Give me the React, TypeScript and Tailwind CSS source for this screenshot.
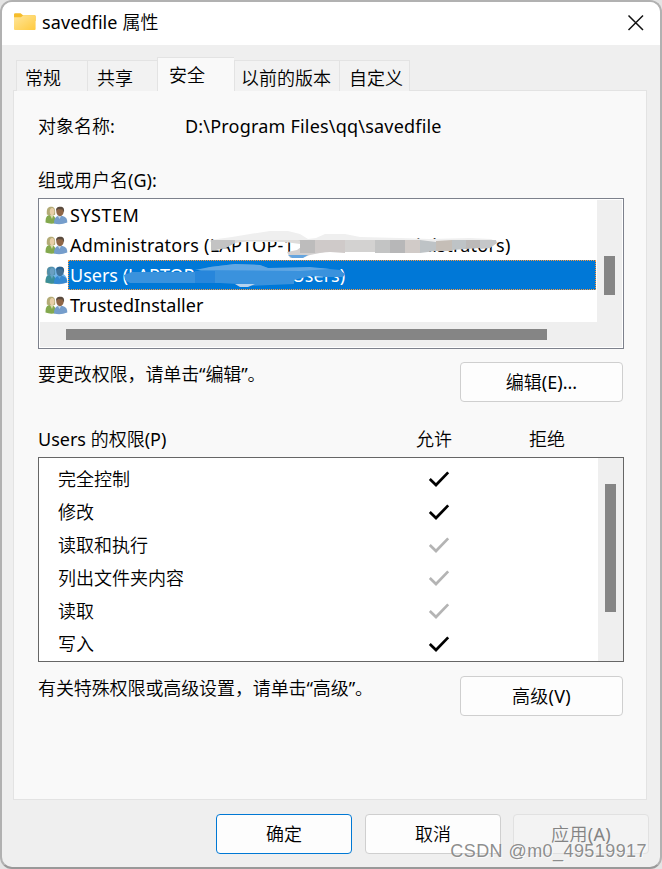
import { useState } from "react";
import clsx from "clsx";

const tabs = [
  { label: "常规", style: "w-[71px] pl-[8px]" },
  { label: "共享", style: "w-[70px] pl-[9px]" },
  { label: "安全", style: "w-[77px] pl-[11px]" },
  { label: "以前的版本", style: "w-[105px] pl-[6px]" },
  { label: "自定义", style: "w-[71px] pl-[9px]" },
];

const permissions = [
  { name: "完全控制", inherited: false },
  { name: "修改", inherited: false },
  { name: "读取和执行", inherited: true },
  { name: "列出文件夹内容", inherited: true },
  { name: "读取", inherited: true },
  { name: "写入", inherited: false },
];

function FolderIcon() {
  return (
    <svg width="22" height="18" viewBox="0 0 22 18">
      <defs>
        <linearGradient id="folder" x1="0" y1="0" x2="1" y2="1">
          <stop offset="0" stopColor="#ffe69b" />
          <stop offset="1" stopColor="#ffca3e" />
        </linearGradient>
      </defs>
      <path d="M0 1.5Q0 .3 1.2 .3H6.6L9 2.2H20.5Q21.6 2.2 21.6 3.4V8H0Z" fill="#f6bd2b" />
      <path d="M0 4.2H7L9.4 2.2H20.6Q21.6 2.2 21.6 3.4V16Q21.6 17 20.6 17H1Q0 17 0 16Z" fill="url(#folder)" />
    </svg>
  );
}

function UsersIcon({ selected }: { selected: boolean }) {
  return (
    <svg width="23" height="19" viewBox="-0.5 0 23 19" className="shrink-0">
      <path d="M0 16.5C0 11.5 1 9 5 9C9 9 10.5 12 10.5 17Q5 18.5 0 16.5Z" fill="#83a84e" />
      <path d="M1.3 8.5C1 3 2 .8 5.7 .8C9 .8 10 3 9.6 8.8L7 9.6H4Z" fill="#b3ab76" />
      <ellipse cx="6.6" cy="5.6" rx="2.3" ry="3.6" fill="#e8cfa8" />
      <path d="M4.5 9L6.5 13L8 9Z" fill="#dcd9ae" />
      <path d="M8.5 17.5C8.5 13 10 9.8 14.5 9.8C19.5 9.8 21.8 12 21.8 16.5Q15 19.3 8.5 17.5Z" fill="#759dcb" />
      <path d="M12 9L13.8 13L16.5 9Z" fill="#c5d7ea" />
      <ellipse cx="14.5" cy="5.6" rx="3.7" ry="4.6" fill="#8f6647" />
      <path d="M10.7 5C10.3 1.8 12 .8 14.6 .8C18 .8 19 2.5 18.5 6.5L17 3.5L12.5 3Z" fill="#5a4a3d" />
      {selected && (
        <path
          d="M0 16.5C0 12 1 10 2 9C.7 3 2 .8 5.7 .8C8 .8 9 1 10 3C11 1 12.5 .8 14.8 .8C18 .8 19 3 18 8C21 10 21.8 13 21.8 16.5Q10 19.3 0 16.5Z"
          fill="#0078d7"
          opacity=".55"
        />
      )}
    </svg>
  );
}

function Check({ inherited }: { inherited: boolean }) {
  return (
    <svg width="22" height="18" viewBox="0 0 22 18" fill="none">
      <path d="M1.8 9L8 15L20.2 2.4" stroke={inherited ? "#b4b4b4" : "#000"} strokeWidth="2.7" />
    </svg>
  );
}

// Brush strokes that hide the computer name
function Redaction() {
  return (
    <svg width="340" height="70" viewBox="200 225 340 70" className="pointer-events-none absolute left-[161px] top-[26px]">
      <path d="M210 240L232 237L250 234L270 231L288 231L300 234L308 239L316 238L325 234L345 234L360 237L400 238L430 239L470 238L491 239L497 242H210Z" fill="#efefef" />
      <path d="M211 240H235V243L226 248L211 251Z" fill="#c3c3c3" />
      <path d="M235 240H300V244L285 242L250 241L235 243Z" fill="#dedcda" />
      <path d="M298 240H330V251L310 255L302 258H290L287 252L297 250L305 244Z" fill="#d2d0d0" />
      <path d="M300 240H315V253H300Z" fill="#bdbcbc" />
      <path d="M315 240H345V253L330 252L315 253Z" fill="#cfcac9" />
      <path d="M345 240H375V252H345Z" fill="#d3d2d1" />
      <path d="M375 240H390V253H375Z" fill="#c3c4c4" />
      <path d="M390 240H405V253H390Z" fill="#b7b7b8" />
      <path d="M405 240H420V253H405Z" fill="#d1cbc8" />
      <path d="M420 240L428 241L436 242V251L420 253Z" fill="#bec3c6" />
      <path d="M436 241L452 240V251L436 251Z" fill="#c5beb7" />
      <path d="M452 240H466V249L452 250Z" fill="#bec3c6" />
      <path d="M466 240L480 240V248L466 249Z" fill="#bcb9b8" />
      <path d="M480 240H496L497 243L490 248L480 249Z" fill="#c5c7c9" />
      <path d="M288 255H308L303 258H292Z" fill="#65a5df" />
    </svg>
  );
}

function SelectedRedaction() {
  return (
    <svg width="240" height="34" viewBox="120 258 240 34" className="pointer-events-none absolute left-[81px] top-[59px]">
      <path d="M124 275L132 272H195L210 267L235 264L260 265L268 268H295L320 268L340 270L345 274L343 277L325 277L310 276L294 280L294 284L270 285L245 286L238 284L220 283L130 283L125 280Z" fill="#3a92dd" />
      <path d="M195 270L210 267L235 264L260 265L268 268L310 267L330 269L300 271Z" fill="#62a7e3" />
      <path d="M195 271H215V283H195Z" fill="#2786db" />
      <path d="M235 284L255 284L248 287H240Z" fill="#b5d3ef" />
    </svg>
  );
}

export default function App() {
  const [activeTab, setActiveTab] = useState("安全");
  const [selected, setSelected] = useState("Users");

  const rowClass = (name: string) =>
    clsx(
      "flex h-[30px] w-[528px] items-center whitespace-pre pl-[2px]",
      selected === name && "bg-[#0078d7] text-white outline-1 -outline-offset-1 outline-dotted outline-[#ff9a3c]"
    );

  const button = "flex items-center justify-center rounded-[4px] border bg-[#fdfdfd] pb-[1px]";

  return (
    <div className="h-[869px] w-[662px] overflow-hidden bg-[#e4e4e4] font-['Noto_Sans','Noto_Sans_CJK_SC_DemiLight','Noto_Sans_CJK_SC_Light','Noto_Sans_CJK_SC',sans-serif] text-[18px] leading-6 text-black">
      <div className="relative h-full w-full overflow-hidden rounded-[12px] border-2 border-[#b1b1b1] border-b-[#999] bg-[#efefef]">
        <header className="flex h-[43px] items-center bg-white pb-[3px] pl-3">
          <FolderIcon />
          <h1 className="ml-[6px] grow tracking-[0.1px]">savedfile 属性</h1>
          <svg width="18" height="18" viewBox="0 0 18 18" className="mr-[15px]" stroke="#111" strokeWidth="1.5">
            <path d="M1.5 2.5L16 17M16 2.5L1.5 17" />
          </svg>
        </header>

        <nav className="mt-3 flex h-[34px] items-end pl-[14px]">
          {tabs.map(tab => (
            <button
              key={tab.label}
              onClick={() => setActiveTab(tab.label)}
              className={clsx(
                "relative flex items-center whitespace-nowrap border-t border-l border-[#e3e3e3] last:border-r",
                tab.style,
                activeTab === tab.label ? "z-10 h-[34px] bg-[#f9f9f9]" : "h-[31px] bg-[#f2f2f2] pt-[3px]"
              )}
            >
              {tab.label}
            </button>
          ))}
        </nav>

        <main className="-mt-px ml-[11px] h-[710px] w-[634px] border border-[#e3e3e3] bg-[#f9f9f9] pt-[23px] pl-6">
          <div className="flex h-6 items-center">
            <span className="w-[147px]">对象名称:</span>
            <span className="tracking-[0.2px]">D:\Program Files\qq\savedfile</span>
          </div>

          <div className="mt-[30px] h-6">组或用户名(G):</div>
          <div className="relative mt-[6px] h-[151px] w-[586px] border border-[#7d818c] bg-white p-px">
            <div className="flex h-[122px]">
              <ul className="w-[557px] pl-[5px]">
                <li className="flex items-center" onClick={() => setSelected("SYSTEM")}>
                  <UsersIcon selected={selected === "SYSTEM"} />
                  <span className={clsx(rowClass("SYSTEM"), "tracking-[0.5px]")}>SYSTEM</span>
                </li>
                <li className="flex items-center" onClick={() => setSelected("Administrators")}>
                  <UsersIcon selected={selected === "Administrators"} />
                  <span className={clsx(rowClass("Administrators"), "tracking-[0.25px]")}>
                    <span className="w-[299px]">Administrators (LAPTOP-1</span>
                    <span>\Administrators)</span>
                  </span>
                </li>
                <li className="flex items-center" onClick={() => setSelected("Users")}>
                  <UsersIcon selected={selected === "Users"} />
                  <span className={rowClass("Users")}>
                    <span className="w-[215px]">Users (LAPTOP-</span>
                    <span>\Users)</span>
                  </span>
                </li>
                <li className="flex items-center" onClick={() => setSelected("TrustedInstaller")}>
                  <UsersIcon selected={selected === "TrustedInstaller"} />
                  <span className={rowClass("TrustedInstaller")}>TrustedInstaller</span>
                </li>
              </ul>
              <div className="w-[25px] bg-[#efefef] pt-[56px] pl-[7px]">
                <div className="h-[39px] w-[11px] bg-[#858585]" />
              </div>
            </div>
            <div className="h-[25px] w-[582px] bg-[#efefef] pt-[7px] pl-[26px]">
              <div className="h-[11px] w-[481px] bg-[#858585]" />
            </div>
            <Redaction />
            <SelectedRedaction />
          </div>

          <div className="mt-[13px] flex h-10">
            <span className="w-[422px] tracking-[-0.1px]">要更改权限，请单击“编辑”。</span>
            <button className={clsx(button, "w-[163px] border-[#cfcfcf]")}>编辑(E)...</button>
          </div>

          <div className="mt-[25px] flex h-6">
            <span className="w-[378px]">Users 的权限(P)</span>
            <span className="w-[113px]">允许</span>
            <span>拒绝</span>
          </div>
          <div className="mt-[6px] flex h-[205px] w-[586px] border border-[#666] bg-white">
            <ul className="w-[559px] pt-[4px] pl-[19px]">
              {permissions.map(p => (
                <li key={p.name} className="flex h-[33px] items-center">
                  <span className="w-[370px]">{p.name}</span>
                  <Check inherited={p.inherited} />
                </li>
              ))}
            </ul>
            <div className="w-[25px] bg-[#efefef] pt-[26px] pl-[7px]">
              <div className="h-[128px] w-[11px] bg-[#858585]" />
            </div>
          </div>

          <div className="mt-[14px] flex h-10">
            <span className="w-[422px] tracking-[-0.1px]">有关特殊权限或高级设置，请单击“高级”。</span>
            <button className={clsx(button, "w-[163px] border-[#cfcfcf] tracking-[0.3px]")}>高级(V)</button>
          </div>
        </main>

        <footer className="mt-[14px] flex h-10 gap-[13px] pl-[214px]">
          <button className={clsx(button, "w-[136px] border-[#0078d4]")}>确定</button>
          <button className={clsx(button, "w-[136px] border-[#cfcfcf]")}>取消</button>
          <button disabled className="-ml-px flex w-[136px] items-center justify-center rounded-[4px] border border-[#e1e1e1] bg-[#f3f3f3] tracking-[0.3px] text-[#838383]">
            应用(A)
          </button>
        </footer>

        <div className="absolute right-[13px] bottom-[4px] font-['Liberation_Sans',sans-serif] text-[18px] tracking-[0.43px] whitespace-nowrap text-[#808080]/90 [text-shadow:1px_1px_0_#ffffffb0]">
          CSDN @m0_49519917
        </div>
      </div>
    </div>
  );
}
